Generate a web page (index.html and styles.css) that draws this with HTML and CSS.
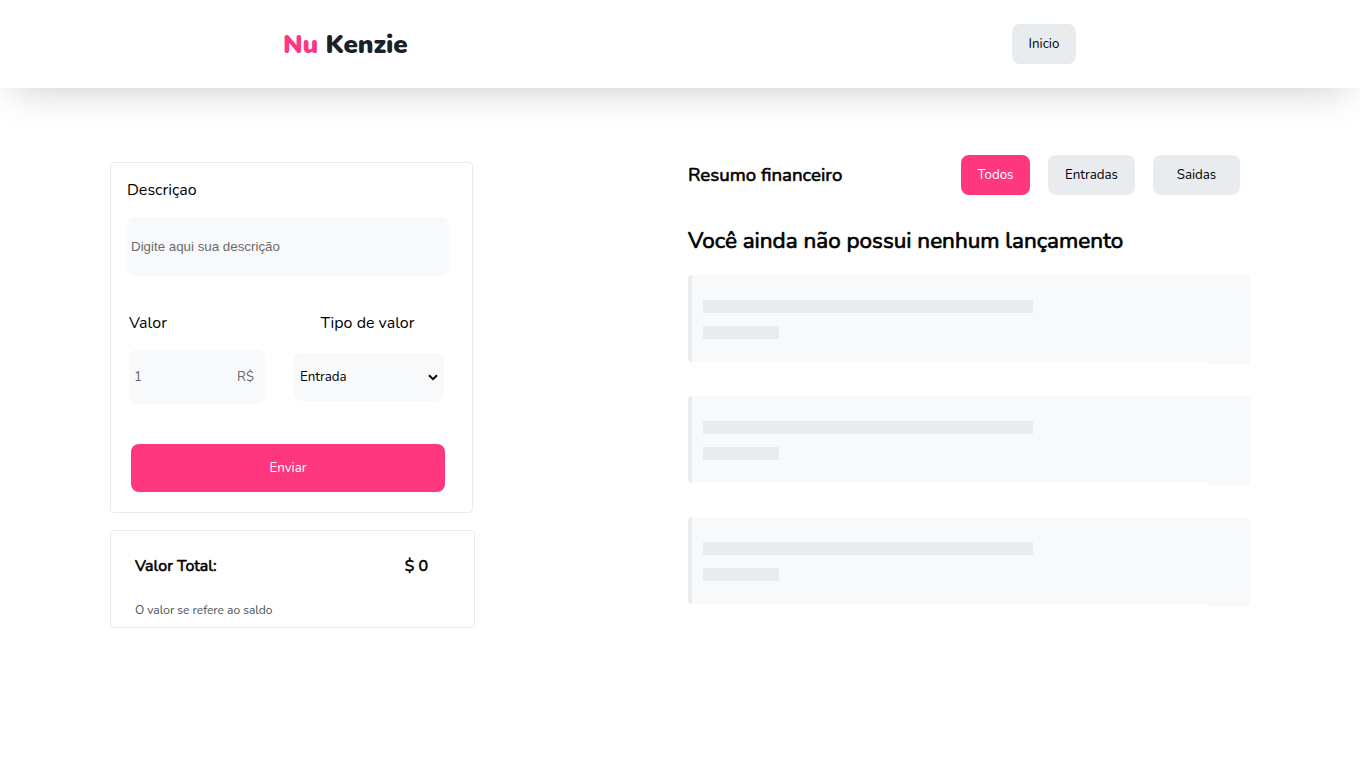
FILE: index.html
```html
<!DOCTYPE html>
<html lang="pt-BR">
<head>
<meta charset="utf-8">
<title>Nu Kenzie</title>
<link rel="stylesheet" href="styles.css">
</head>
<body>
<header class="header">
  <h1 class="logo"><span class="logo-accent">Nu</span> Kenzie</h1>
  <button class="btn btn-home">Inicio</button>
</header>
<main class="main">
  <section class="sidebar">
    <form class="form">
      <label class="label" for="desc">Descriçao</label>
      <input class="input-desc" id="desc" placeholder="Digite aqui sua descrição">
      <div class="row">
        <div class="col-value">
          <span class="label label-value">Valor</span>
          <div class="value-box"><span>1</span><span>R$</span></div>
        </div>
        <div class="col-type">
          <span class="label label-type">Tipo de valor</span>
          <div class="select-box"><span>Entrada</span>
            <svg class="chevron" viewBox="0 0 10 7"><path d="M1 1.2 5 5.2 9 1.2" fill="none" stroke="#000" stroke-width="2"/></svg>
          </div>
        </div>
      </div>
      <button class="submit" type="button">Enviar</button>
    </form>
    <div class="total">
      <div class="total-row"><span class="total-label">Valor Total:</span><span class="total-amount">$ 0</span></div>
      <p class="total-note">O valor se refere ao saldo</p>
    </div>
  </section>
  <section class="summary">
    <div class="summary-head">
      <h2 class="summary-title">Resumo financeiro</h2>
      <div class="filters">
        <button class="btn btn-active">Todos</button>
        <button class="btn btn-wide">Entradas</button>
        <button class="btn btn-wide">Saidas</button>
      </div>
    </div>
    <h3 class="empty-title">Você ainda não possui nenhum lançamento</h3>
    <ul class="cards">
      <li class="card"><div class="bar"></div><div class="bar bar-short"></div></li>
      <li class="card"><div class="bar"></div><div class="bar bar-short"></div></li>
      <li class="card"><div class="bar"></div><div class="bar bar-short"></div></li>
    </ul>
  </section>
</main>
</body>
</html>
```

FILE: styles.css
```css
* { box-sizing: border-box; margin: 0; padding: 0; }
body { font-family: "Nunito", "Lato", sans-serif; color: #000; background: #fff; height: 768px; overflow: hidden; }
button, input { border: 0; font-family: inherit; }
.header { height: 88px; padding: 0 284px 0 283px; display: flex; align-items: center; justify-content: space-between; background: #fff; box-shadow: 0 12px 40px -12px rgba(0, 0, 0, .22); }
.logo { padding-top: 2px; font-size: 26px; line-height: 32px; font-weight: 900; color: #1c2127; white-space: nowrap; letter-spacing: -.1px; }
.logo-accent { color: #ff377f; }
.btn { height: 40px; padding-bottom: 1px; border-radius: 8px; background: #e9ecef; font-size: 13.333px; color: #000; white-space: nowrap; }
.btn-home { width: 64px; }
.btn-active { width: 69px; background: #ff377f; color: #fff; }
.btn-wide { width: 87px; }
.main { display: flex; padding-left: 110px; }
.sidebar { width: 365px; padding-top: 74px; }
.form { width: 363px; height: 351px; padding: 16px; border: 1px solid #e9ecef; border-radius: 4px; display: flex; flex-direction: column; align-items: flex-start; }
.label { font-size: 16px; line-height: 22px; white-space: nowrap; }
.input-desc { width: 322px; height: 59px; margin-top: 16px; padding: 0 4px; border-radius: 8px; background: #f8f9fb; font: 13.333px "Liberation Sans", sans-serif; }
.input-desc::placeholder { color: #6c6c6c; }
.row { display: flex; gap: 29px; margin: 36px 0 0 2px; }
.col-value { width: 136px; display: flex; flex-direction: column; }
.value-box { height: 54px; margin-top: 16px; padding: 0 11px 1px 5px; border-radius: 8px; background: #f8f9fb; display: flex; justify-content: space-between; align-items: center; font-size: 13.333px; color: #666; }
.col-type { width: 150px; display: flex; flex-direction: column; align-items: center; }
.label-type { padding-right: 3px; }
.select-box { width: 150px; height: 48px; margin-top: 19px; padding: 0 6px; border-radius: 8px; background: #f8f9fb; display: flex; justify-content: space-between; align-items: center; font-size: 13.333px; }
.chevron { width: 10px; height: 7px; }
.submit { width: 314px; height: 48px; padding-bottom: 1px; margin: 40px 0 0 4px; border-radius: 8px; background: #ff377f; color: #fff; font-size: 13.333px; }
.total { height: 98px; margin-top: 17px; padding: 24px 46px 0 24px; border: 1px solid #e9ecef; border-radius: 4px; }
.total-row { display: flex; justify-content: space-between; font-size: 16px; line-height: 22px; font-weight: 400; -webkit-text-stroke: .6px; }
.total-note { margin-top: 25px; font-size: 12px; line-height: 16px; color: #495057; }
.summary { width: 562px; margin-left: 213px; padding-top: 67px; }
.summary-head { height: 40px; padding-right: 10px; display: flex; align-items: center; justify-content: space-between; }
.summary-title { font-size: 18.72px; font-weight: 400; -webkit-text-stroke: .6px; white-space: nowrap; }
.filters { display: flex; gap: 18px; }
.empty-title { margin-top: 30px; font-size: 22.5px; line-height: 32px; font-weight: 400; -webkit-text-stroke: .7px; white-space: nowrap; }
.cards { margin-top: 18px; display: flex; flex-direction: column; gap: 34px; list-style: none; }
.card { position: relative; height: 87px; padding: 25px 0 0 11px; border-left: 4px solid #e9ecef; border-radius: 4px 4px 0 4px; background: #f8f9fb; }
.card::after { content: ""; position: absolute; right: 0; bottom: -2px; width: 42px; height: 4px; background: #f8f9fb; border-radius: 0 0 3px 0; }
.bar { width: 330px; height: 13px; background: #e9ebed; }
.bar-short { width: 76px; margin-top: 13px; }
```
